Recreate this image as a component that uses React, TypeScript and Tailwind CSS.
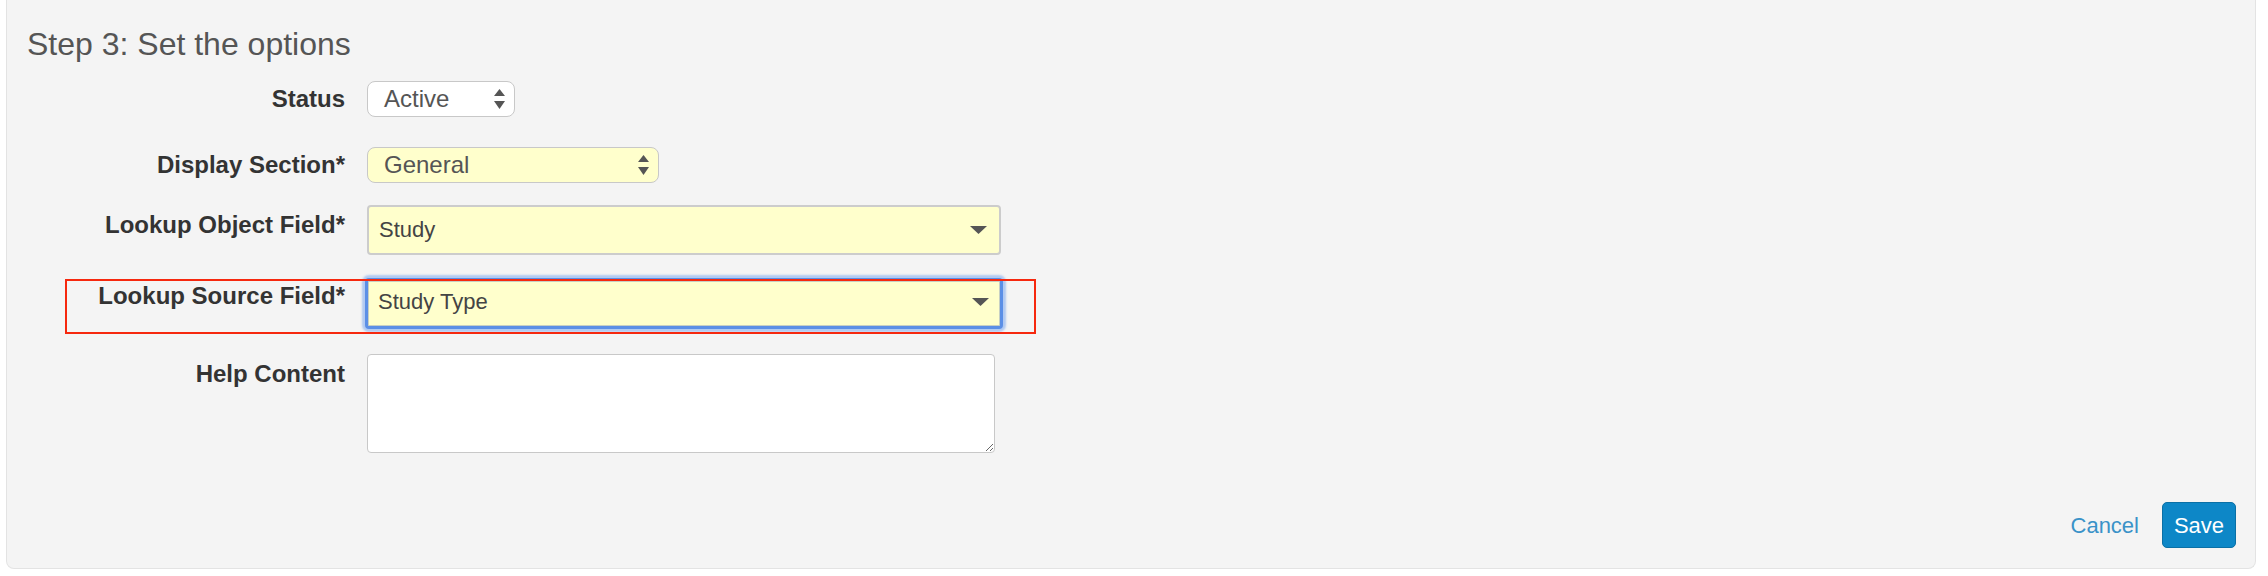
import React from "react";

const UpDown = () => (
  <svg width="11" height="20" viewBox="0 0 11 20" className="shrink-0">
    <polygon points="5.5,0 11,7 0,7" fill="#555" />
    <polygon points="0,12 11,12 5.5,20" fill="#555" />
  </svg>
);

const Caret = () => (
  <svg width="17" height="8" viewBox="0 0 17 8" className="shrink-0">
    <polygon points="0,0 17,0 8.5,8" fill="#555" />
  </svg>
);

function Label({ text, className = "" }: { text: string; className?: string }) {
  return (
    <div
      className={
        "w-[338px] shrink-0 text-right text-[24px] leading-[36px] font-bold text-[#333] " + className
      }
    >
      {text}
    </div>
  );
}

export default function App() {
  return (
    <div className="min-h-screen bg-white font-['Liberation_Sans',Arial,sans-serif]">
      <div className="ml-[6px] mr-[12px] h-[569px] flex flex-col border border-t-0 border-[#e3e3e3] bg-[#f4f4f4] rounded-b-[8px]">
        <h3 className="pl-[20px] pt-[26px] text-[32px] leading-[36px] text-[#555]">
          Step 3: Set the options
        </h3>

        {/* Status */}
        <div className="mt-[19px] flex items-start gap-[22px]">
          <Label text="Status" />
          <div className="w-[148px] h-[36px] flex items-center justify-between pl-[16px] pr-[9px] bg-white border-[1.5px] border-[#c8c8c8] rounded-[8px]">
            <span className="text-[24px] leading-none text-[#555]">Active</span>
            <UpDown />
          </div>
        </div>

        {/* Display section */}
        <div className="mt-[30px] flex items-start gap-[22px]">
          <Label text="Display Section*" />
          <div className="w-[292px] h-[36px] flex items-center justify-between pl-[16px] pr-[9px] bg-[#ffffcc] border-[1.5px] border-[#c8c8c8] rounded-[8px]">
            <span className="text-[24px] leading-none text-[#555]">General</span>
            <UpDown />
          </div>
        </div>

        {/* Lookup object field */}
        <div className="mt-[22px] flex items-start gap-[22px]">
          <Label text="Lookup Object Field*" className="pt-[2px]" />
          <div className="w-[634px] h-[50px] flex items-center justify-between pl-[10px] pr-[12px] bg-[#ffffcc] border-2 border-[#cccccc] rounded-[4px]">
            <span className="text-[22px] leading-none text-[#444]">Study</span>
            <Caret />
          </div>
        </div>

        {/* Lookup source field */}
        <div className="relative mt-[23px] flex items-start gap-[22px]">
          <Label text="Lookup Source Field*" />
          <div className="-ml-[2px] w-[638px] h-[51px] flex items-center justify-between pl-[10px] pr-[11px] pb-[3px] bg-[#ffffcc] border-[3px] border-[#5b8fe6] rounded-[4px] shadow-[0_0_2px_3px_rgba(110,160,240,0.5),inset_0_0_0_1px_#c6cfc4]">
            <span className="text-[22px] leading-none text-[#444]">Study Type</span>
            <Caret />
          </div>
          <div className="pointer-events-none absolute left-[58px] top-[1px] w-[971px] h-[55px] border-2 border-[#f6280e] z-10" />
        </div>

        {/* Help content */}
        <div className="mt-[25px] flex items-start gap-[22px]">
          <Label text="Help Content" className="pt-[2px]" />
          <textarea className="w-[628px] h-[99px] bg-white border-[1.5px] border-[#c8c8c8] rounded-[4px] outline-none" />
        </div>

        <div className="mt-auto pb-[20px] pr-[19px] flex items-center justify-end gap-[23px]">
          <a className="text-[22px] text-[#3a92c8] cursor-pointer">Cancel</a>
          <button className="w-[74px] h-[46px] flex items-center justify-center bg-[#0d87c7] border border-[#0a70a6] rounded-[5px] text-[22px] text-white">
            Save
          </button>
        </div>
      </div>
    </div>
  );
}
